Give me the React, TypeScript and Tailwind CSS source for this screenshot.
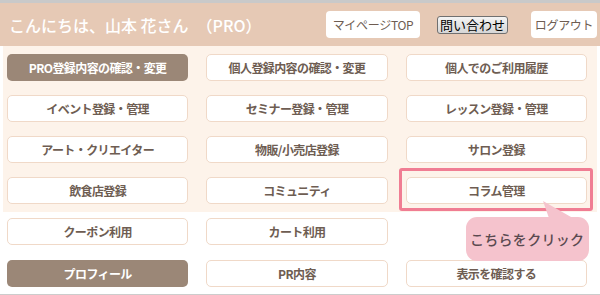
const jp = { fontFamily: '"Noto Sans CJK JP", "Noto Sans", sans-serif' };

type Item = { label: string; dark?: boolean };

const topRows: Item[][] = [
  [{ label: 'PRO登録内容の確認・変更', dark: true }, { label: '個人登録内容の確認・変更' }, { label: '個人でのご利用履歴' }],
  [{ label: 'イベント登録・管理' }, { label: 'セミナー登録・管理' }, { label: 'レッスン登録・管理' }],
  [{ label: 'アート・クリエイター' }, { label: '物販/小売店登録' }, { label: 'サロン登録' }],
  [{ label: '飲食店登録' }, { label: 'コミュニティ' }, { label: 'コラム管理' }],
];

function MenuButton({ item }: { item: Item }) {
  return (
    <div
      className={
        item.dark
          ? 'h-[27px] flex items-center justify-center rounded-[5px] bg-[#9b8777] text-white text-[12px] font-bold tracking-[-0.6px] whitespace-nowrap'
          : 'h-[27px] flex items-center justify-center rounded-[5px] bg-white border border-[#f0d9c8] text-[#6e5d52] text-[12px] font-bold tracking-[-0.6px] whitespace-nowrap'
      }
    >
      {item.label}
    </div>
  );
}

export default function App() {
  return (
    <div className="w-[600px] h-[295px] bg-white overflow-hidden border-t-[3px] border-[#c9c9c9] relative" style={jp}>
      {/* header */}
      <div className="h-[43px] bg-[#e6c9b5] flex items-center pl-[9px] pr-[3px]">
        <div className="text-white text-[16px] font-medium whitespace-pre">こんにちは、山本 花さん　（PRO）</div>
        <div className="ml-auto flex items-center">
          <div className="w-[94px] h-[27px] bg-white rounded-[4px] flex items-center justify-center text-[12px] text-[#6e5d52] tracking-[-0.3px] whitespace-nowrap">マイページTOP</div>
          <div className="ml-[17px] w-[71px] h-[18px] rounded-[3px] border border-[#707070] bg-gradient-to-b from-[#f4f4f4] to-[#d6d6d6] flex items-center justify-center text-[13px] text-black leading-none whitespace-nowrap">問い合わせ</div>
          <div className="ml-[23px] w-[66px] h-[27px] bg-white rounded-[4px] flex items-center justify-center text-[12px] text-[#6e5d52] tracking-[-0.3px] whitespace-nowrap">ログアウト</div>
        </div>
      </div>

      {/* beige section */}
      <div className="bg-[#fdf3ea] pt-[8px] pb-[8px] mx-[3px]">
        <div className="ml-[4px] w-[580px] grid grid-cols-3 gap-x-[18px] gap-y-[14px]">
          {topRows.flat().map((item, i) => (
            <div key={i} className="relative">
              <MenuButton item={item} />
              {item.label === 'コラム管理' && (
                <div className="absolute -left-[7px] -right-[6px] -top-[9px] -bottom-[7px] border-[3px] border-[#f07d93] rounded-[3px]" />
              )}
            </div>
          ))}
        </div>
      </div>

      {/* white section */}
      <div className="pt-[6px] ml-[7px] w-[580px] grid grid-cols-3 gap-x-[18px] gap-y-[15px]">
        <MenuButton item={{ label: 'クーポン利用' }} />
        <MenuButton item={{ label: 'カート利用' }} />
        <div className="relative">
          <svg className="absolute left-[134px] -top-[17px]" width="40" height="20" viewBox="0 0 40 20">
            <polygon points="3,0 10,20 38,20" fill="#f5c3cd" />
          </svg>
          <div className="absolute left-[60px] -top-[1px] w-[123px] h-[44px] rounded-[11px] bg-[#f5c3cd] flex items-center justify-center text-[14px] font-medium text-[#5a4a50] tracking-[0.3px] whitespace-nowrap">
            こちらをクリック
          </div>
        </div>
        <MenuButton item={{ label: 'プロフィール', dark: true }} />
        <MenuButton item={{ label: 'PR内容' }} />
        <MenuButton item={{ label: '表示を確認する' }} />
      </div>

      <div className="absolute left-0 right-0 bottom-0 h-px bg-[#cccccc]" />
    </div>
  );
}
